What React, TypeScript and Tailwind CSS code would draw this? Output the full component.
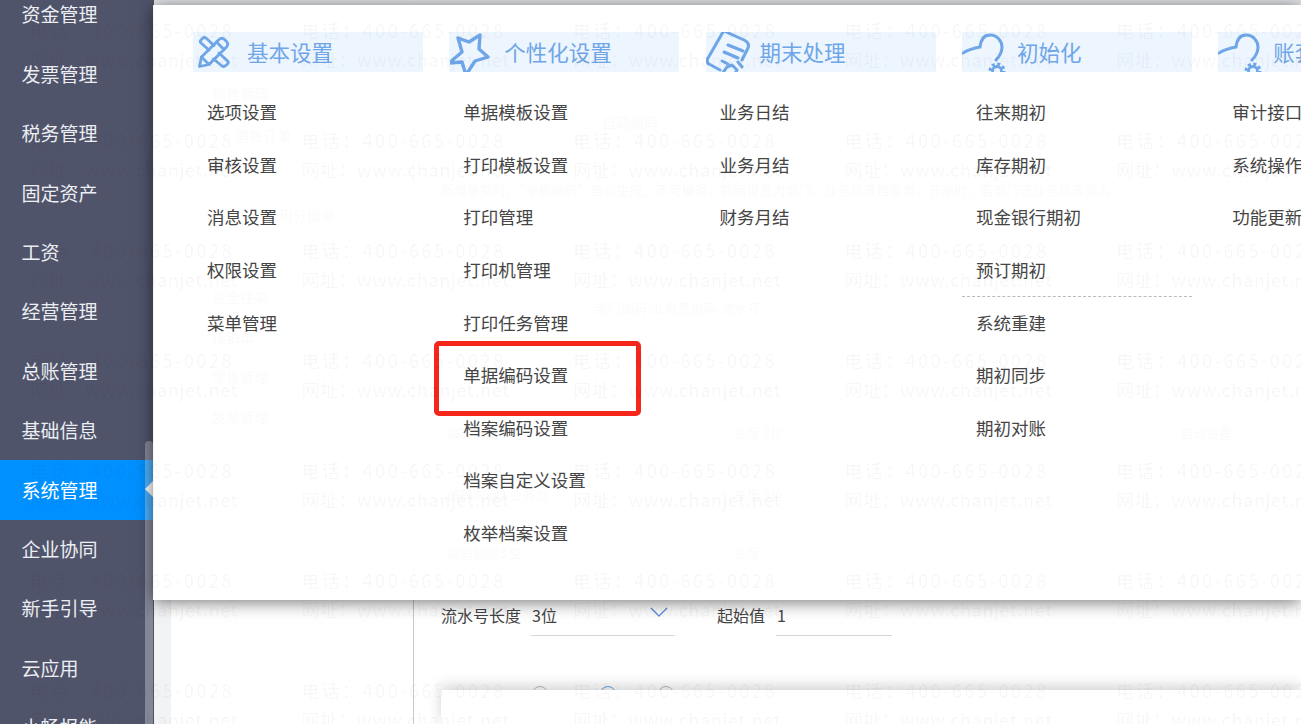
import React from "react";

const FONT = "font-['Noto_Sans_CJK_SC','Liberation_Sans',sans-serif]";

const sideItems = [
  "资金管理",
  "发票管理",
  "税务管理",
  "固定资产",
  "工资",
  "经营管理",
  "总账管理",
  "基础信息",
  "系统管理",
  "企业协同",
  "新手引导",
  "云应用",
  "小畅报能",
];

const IconPencil = () => (
  <svg viewBox="0 0 32 32" className="h-[32px] w-[32px] shrink-0" fill="none" stroke="#6ea6e8" strokeWidth="2.8" strokeLinejoin="round" strokeLinecap="round">
    <path d="M1.5 30.5L3.5 21 21 3.5Q24 1 26.5 3.5L28.5 5.5Q31 8 28.5 11L11 28.5z" />
    <path d="M18.5 6L26 13.5M3.5 21L11 28.5" />
    <path d="M11 14L3 7Q1.5 5.5 3 4L5 2Q6.500 1 8 2L16 9.500" />
    <path d="M21 17L29.500 25Q31 26.500 29.500 28L27 30Q25.500 31 24 30L15.500 23" />
  </svg>
);

const IconStar = () => (
  <svg viewBox="0 0 40 40" className="h-[40px] w-[40px] shrink-0" fill="none" stroke="#6ea6e8" strokeWidth="3.4" strokeLinejoin="round">
    <path d="M30 3L29 17 38 25 25 29 16 43 12 30 -1 31 12 20 8 6 19 10z" />
  </svg>
);

const IconNote = () => (
  <svg viewBox="0 0 44 40" className="h-[40px] w-[44px] shrink-0" fill="none" stroke="#6ea6e8" strokeWidth="3" strokeLinecap="round" strokeLinejoin="round">
    <path d="M18 -1L38 8Q44 11 42 16L36 28" />
    <path d="M17 0L1.500 27Q0.500 31 3 32L14 38" />
    <path d="M22 13L37 19M18 20L32 26M16 29L22 32" />
    <path d="M16 42L21 35 26 33 31 38 29 42M32 30L36 35" />
  </svg>
);

const IconCloud = () => (
  <svg viewBox="0 0 44 40" className="h-[40px] w-[44px] shrink-0" fill="none" stroke="#6ea6e8" strokeLinecap="round">
    <path d="M1 21C6 18 12 16 18 15C19 7 23 3 28 3C35 3 40 9 40 15C40 21 37 25 34 28" strokeWidth="3" />
    <circle cx="35" cy="39" r="4.500" strokeWidth="2.800" />
    <circle cx="35" cy="39" r="7" strokeWidth="3" strokeDasharray="3 2.500" strokeLinecap="butt" />
  </svg>
);

const sections = [
  { title: "基本设置", icon: <IconPencil />, headClass: "pl-[5px] gap-[17px]", items: ["选项设置", "审核设置", "消息设置", "权限设置", "菜单管理"] },
  { title: "个性化设置", icon: <IconStar />, headClass: "pl-[1px] gap-[14px]", items: ["单据模板设置", "打印模板设置", "打印管理", "打印机管理", "打印任务管理", "单据编码设置", "档案编码设置", "档案自定义设置", "枚举档案设置"] },
  { title: "期末处理", icon: <IconNote />, headClass: "gap-[10px]", items: ["业务日结", "业务月结", "财务月结"] },
  { title: "初始化", icon: <IconCloud />, headClass: "gap-[11px]", items: ["往来期初", "库存期初", "现金银行期初", "预订期初", "系统重建", "期初同步", "期初对账"] },
  { title: "账套管理", icon: <IconCloud />, headClass: "gap-[11px]", items: ["审计接口", "系统操作日志", "功能更新"] },
];

function Chevron({ open }: { open?: boolean }) {
  return (
    <svg viewBox="0 0 10 10" className="h-[10px] w-[10px] shrink-0" fill="none" stroke="#aaa" strokeWidth="1">
      <path d={open ? "M1 3l4 4 4-4" : "M3 1l4 4-4 4"} />
    </svg>
  );
}

function Watermark() {
  const rows = [0, 1, 2, 3, 4, 5, 6];
  const cols = [0, 1, 2, 3, 4];
  return (
    <div className="pointer-events-none absolute inset-0 z-30 overflow-hidden whitespace-nowrap pl-[30px] pt-[18px] text-[18px] font-medium leading-[24px] text-black/[0.035]">
      {rows.map((r) => (
        <div key={r} className="flex h-[110px]">
          {cols.map((c) => (
            <div key={c} className="w-[271.5px] shrink-0">
              <div className="tracking-[2.3px]">电话：400-665-0028</div>
              <div className="mt-[5px] tracking-[0.4px]">网址：www.chanjet.net</div>
            </div>
          ))}
        </div>
      ))}
    </div>
  );
}

export default function App() {
  return (
    <div className={`relative flex h-[724px] w-full overflow-hidden bg-white ${FONT}`}>
      {/* Sidebar */}
      <div className="relative w-[153px] shrink-0 overflow-hidden bg-[#50546b]">
        <div className="-mt-[15px]">
          {sideItems.map((name) => (
            <div
              key={name}
              className={`relative flex h-[59.4px] items-center pl-[21.500px] text-[19px] text-[#eceef2] ${name === "系统管理" ? "bg-[#0090ff] text-white" : ""}`}
            >
              {name}
              {name === "系统管理" && (
                <div className="absolute right-0 top-[21px] z-10 h-0 w-0 border-y-[8px] border-r-[8px] border-y-transparent border-r-white" />
              )}
            </div>
          ))}
        </div>
        {/* scrollbar */}
        <div className="absolute bottom-0 right-0 top-[441px] w-[8px] rounded-t bg-white/30" />
      </div>

      {/* Page behind the menu */}
      <div className="relative flex min-w-0 flex-1 flex-col border-l border-[#555]">
        <div className="h-[5px] bg-[#e4e6e9]" />
        <div className="flex flex-1">
          <div className="w-[17px] bg-[#f2f3f5]" />
          <div className="w-[243px] border-r border-[#c9c9c9] pt-[77.500px] text-[14px] leading-[21px] text-[#999]">
            <div className="flex items-center gap-[5px] pl-[26px]"><Chevron open />销售管理</div>
            <div className="mt-[21px] pl-[64px]">销售订单</div>
            <div className="mt-[59px] pl-[94px]">费用分摊单</div>
            <div className="mt-[61px] flex items-center gap-[5px] pl-[26px]"><Chevron />资金往来</div>
            <div className="mt-[19px] flex items-center gap-[5px] pl-[26px]"><Chevron />核销单</div>
            <div className="mt-[19px] flex items-center gap-[5px] pl-[26px]"><Chevron />零售管理</div>
            <div className="mt-[19px] flex items-center gap-[5px] pl-[26px]"><Chevron />发票管理</div>
          </div>
          <div className="flex min-w-0 flex-1 flex-col pl-[27px] text-[13px] leading-[20px] text-[#999]">
            <div className="flex items-center gap-[8px] pl-[139px] pt-[107px] text-[14px]">
              <div className="h-[14px] w-[14px] rounded-full border border-[#bbb]" />
              自动编码
            </div>
            <div className="mt-[48px] whitespace-nowrap">新增单据时，“单据编码”自动生成，不可编辑，前缀设置为部门、业务员等档案类，开单时，若部门或业务员等录入</div>
            <div className="mt-[98px] pl-[154px]">部门编码-业务员编码-流水号</div>
            <div className="mt-[105px] flex pl-[6px]">
              <span className="w-[287px]">编码前缀1</span>
              <span className="w-[226px]">长度 2位</span>
              <span className="ml-[220px]">启动设置</span>
            </div>
            <div className="mt-[42px] flex pl-[6px]">
              <span className="w-[287px]">编码前缀2 业务员</span>
              <span>长度 3位</span>
            </div>
            <div className="mt-[38px] flex pl-[6px]">
              <span className="w-[287px]">编码前缀3 空</span>
              <span>长度</span>
            </div>
            <div className="mt-[40px] flex h-[37px] items-start text-[16px] leading-[24px] text-[#444]">
              <span className="w-[90px]">流水号长度</span>
              <div className="relative h-[33px] w-[144px] border-b border-[#d5d7dc] pl-px">
                3位
                <svg viewBox="0 0 18 10" className="absolute right-[7px] top-[4px] h-[10px] w-[18px]" fill="none" stroke="#5f8fdc" strokeWidth="1.4">
                  <path d="M1 1l8 8 8-8" />
                </svg>
              </div>
              <span className="ml-[42px] w-[59px]">起始值</span>
              <div className="h-[33px] w-[116px] border-b border-[#d5d7dc] pl-px">1</div>
            </div>
            <div className="mt-[46px] flex h-[4px] overflow-hidden pl-[91px]">
              <div className="h-[16px] w-[16px] rounded-full border border-[#bbb]" />
              <div className="ml-[52px] h-[16px] w-[16px] rounded-full border border-[#5f9fe8]" />
              <div className="ml-[42px] h-[16px] w-[16px] rounded-full border border-[#bbb]" />
            </div>
            <div className="flex-1 bg-white shadow-[0_-4px_14px_rgba(0,0,0,0.18)]" />
          </div>
        </div>
      </div>

      {/* Menu panel */}
      <div className="absolute left-[153px] right-0 top-[5px] z-20 h-[595px] bg-white/95 shadow-[0_2px_16px_rgba(0,0,0,0.55)]">
        <div className="flex pl-[40px] pt-[27px]">
          {sections.map((s) => (
            <div key={s.title} className="relative mr-[26.300px] w-[230px] shrink-0">
              <div className={`flex h-[40px] items-center overflow-hidden whitespace-nowrap bg-[#ebf4fe]/90 text-[21.500px] text-[#6ea6e8] ${s.headClass}`}>
                {s.icon}
                <span>{s.title}</span>
              </div>
              <div className="pt-[14px]">
                {s.items.map((it, i) => (
                  <React.Fragment key={it}>
                    <div className="flex h-[52.600px] items-center whitespace-nowrap pl-[14px] text-[17.500px] text-[#454545]">{it}</div>
                    {s.title === "初始化" && i === 3 && (
                      <div className="-mb-px h-px border-t border-dashed border-[#bbb]" />
                    )}
                  </React.Fragment>
                ))}
              </div>
              {s.title === "个性化设置" && (
                <div className="absolute left-[-15px] top-[309px] h-[75px] w-[207px] rounded-[5px] border-[5px] border-[#f5261a]" />
              )}
            </div>
          ))}
        </div>
      </div>

      <Watermark />
    </div>
  );
}
